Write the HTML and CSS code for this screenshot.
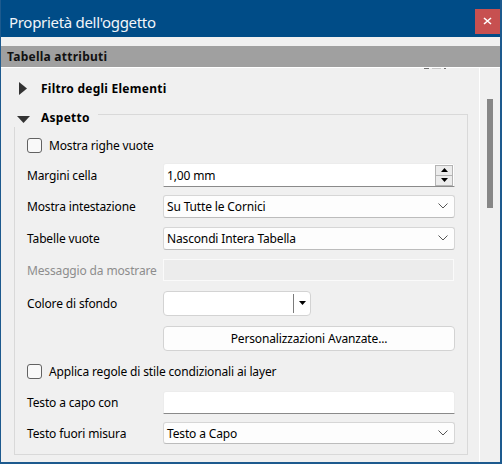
FILE: index.html
```html
<!DOCTYPE html>
<html lang="it">
<head>
<meta charset="utf-8">
<title>Proprietà dell'oggetto</title>
<link rel="stylesheet" href="styles.css">
</head>
<body>
<div class="window">
  <header class="titlebar">
    <span class="title">Proprietà dell'oggetto</span>
    <span class="close">
      <svg width="9" height="8" viewBox="0 0 9 8"><path d="M1 1 L8 7 M8 1 L1 7" stroke="#fff" stroke-width="1.6" fill="none"/></svg>
    </span>
  </header>
  <div class="strip"></div>
  <div class="section">Tabella attributi</div>
  <div class="scrollarea">
    <div class="viewport">
      <div class="clip-marks"><i class="dk"></i><i class="lt"></i><i class="dk sm"></i></div>
      <div class="collapsed">
        <svg class="tri-right" width="8" height="13" viewBox="0 0 8 13"><path d="M0 0 L8 6.5 L0 13 Z" fill="#333"/></svg>
        <span class="bold">Filtro degli Elementi</span>
      </div>
      <div class="group">
        <div class="legend">
          <svg class="tri-down" width="13" height="7" viewBox="0 0 13 7"><path d="M0 0 L13 0 L6.5 7 Z" fill="#333"/></svg>
          <span class="bold">Aspetto</span>
        </div>
        <div class="form">
          <label class="check-row"><span class="checkbox"></span>Mostra righe vuote</label>

          <span class="label">Margini cella</span>
          <div class="spinbox">
            <span class="value">1,00 mm</span>
            <span class="spin">
              <span class="spin-btn"><svg width="7" height="4" viewBox="0 0 7 4"><path d="M0 4 L3.5 0 L7 4 Z" fill="#000"/></svg></span>
              <span class="spin-btn"><svg width="7" height="4" viewBox="0 0 7 4"><path d="M0 0 L7 0 L3.5 4 Z" fill="#000"/></svg></span>
            </span>
          </div>

          <span class="label">Mostra intestazione</span>
          <div class="combo"><span>Su Tutte le Cornici</span><svg class="chev" width="10" height="6" viewBox="0 0 10 6"><path d="M0.5 0.5 L5 5 L9.5 0.5" stroke="#555" stroke-width="1" fill="none"/></svg></div>

          <span class="label">Tabelle vuote</span>
          <div class="combo"><span>Nascondi Intera Tabella</span><svg class="chev" width="10" height="6" viewBox="0 0 10 6"><path d="M0.5 0.5 L5 5 L9.5 0.5" stroke="#555" stroke-width="1" fill="none"/></svg></div>

          <span class="label disabled">Messaggio da mostrare</span>
          <div class="field-disabled"></div>

          <span class="label">Colore di sfondo</span>
          <div class="colorbtn">
            <span class="swatch"></span>
            <span class="sep"></span>
            <svg class="drop" width="7" height="4" viewBox="0 0 7 4"><path d="M0 0 L7 0 L3.5 4 Z" fill="#000"/></svg>
          </div>

          <div class="pushbtn">Personalizzazioni Avanzate...</div>

          <label class="check-row"><span class="checkbox"></span>Applica regole di stile condizionali ai layer</label>

          <span class="label">Testo a capo con</span>
          <div class="lineedit"></div>

          <span class="label">Testo fuori misura</span>
          <div class="combo short"><span>Testo a Capo</span><svg class="chev" width="10" height="6" viewBox="0 0 10 6"><path d="M0.5 0.5 L5 5 L9.5 0.5" stroke="#555" stroke-width="1" fill="none"/></svg></div>
        </div>
      </div>
    </div>
    <div class="scrollbar"><div class="thumb"></div></div>
  </div>
</div>
</body>
</html>
```

FILE: styles.css
```css
* { box-sizing: border-box; }

html, body {
  margin: 0;
  padding: 0;
  background: #f0f0f0;
}

body {
  font-family: "Noto Sans", "Open Sans", sans-serif;
  font-size: 12px;
  letter-spacing: -0.15px;
  color: #000;
}

.window {
  width: 502px;
  height: 464px;
  display: flex;
  flex-direction: column;
  background: #f0f0f0;
  border-left: 1px solid #1d5a8e;
  border-right: 2px solid #1d5a8e;
  border-bottom: 2px solid #1d5a8e;
  overflow: hidden;
}

.titlebar {
  height: 37px;
  flex: none;
  background: #004c87;
  display: flex;
  align-items: center;
  justify-content: space-between;
  padding: 6px 0 0 9px;
  margin-left: -1px;
  margin-right: -2px;
}

.title {
  color: #f2f5f9;
  font-size: 15px;
  letter-spacing: -0.3px;
}

.close {
  width: 25px;
  height: 25px;
  margin-right: 2px;
  margin-top: -1px;
  background: #c75050;
  display: flex;
  align-items: center;
  justify-content: center;
}

.strip {
  height: 9px;
  flex: none;
  background: #f0f0f0;
}

.section {
  height: 21px;
  flex: none;
  background: #a0a0a0;
  font-weight: bold;
  letter-spacing: 0.25px;
  padding-left: 6px;
  display: flex;
  align-items: center;
  color: #111;
}

.scrollarea {
  flex: 1;
  display: flex;
  border-top: 1px solid #ffffff;
  min-height: 0;
}

.viewport {
  flex: 1;
  position: relative;
  background: #f0f0f0;
  border-right: 1px solid #ffffff;
}

.clip-marks {
  position: absolute;
  top: 0;
  left: 423px;
  display: flex;
  gap: 3px;
}
.clip-marks i {
  display: block;
  height: 1px;
}
.clip-marks .dk { width: 5px; background: #707070; }
.clip-marks .lt { width: 9px; background: #c8c8c8; }
.clip-marks .sm { width: 2px; }

.scrollbar {
  width: 20px;
  flex: none;
  background: #f0f0f0;
  padding: 31px 0 0 7px;
}

.thumb {
  width: 6px;
  height: 109px;
  background: #868686;
}

.bold {
  font-weight: bold;
  letter-spacing: 0.25px;
}

.collapsed {
  margin-top: 10px;
  height: 20px;
  display: flex;
  align-items: center;
  padding-left: 18px;
  gap: 14px;
}

.group {
  position: relative;
  margin: 16px 11px 0 13px;
  border: 1px solid #d9d9d9;
  padding: 15px 12px 6px 12px;
}

.legend {
  position: absolute;
  top: -8px;
  left: -1px;
  height: 20px;
  width: 84px;
  background: #f0f0f0;
  display: flex;
  align-items: center;
  padding-left: 3px;
  gap: 11px;
}

.tri-down {
  margin-top: 4px;
}

.form {
  display: grid;
  grid-template-columns: 136px 1fr;
  grid-template-rows: 30px 30px 32px 32px 32px 34px 36px 30px 32px 30px;
  align-items: center;
}

.label {
  white-space: nowrap;
}
.label.disabled {
  color: #8d8d8d;
}

.check-row {
  grid-column: 1 / -1;
  display: flex;
  align-items: center;
  gap: 7px;
}

.checkbox {
  width: 15px;
  height: 15px;
  border: 1px solid #626262;
  border-radius: 3px;
  background: #f9f9f9;
}

.spinbox {
  height: 24px;
  background: #fff;
  border: 1px solid #ececec;
  border-bottom: 1px solid #8a8a8a;
  border-radius: 3px 3px 0 0;
  display: flex;
  align-items: center;
  justify-content: space-between;
  padding-left: 3px;
  padding-right: 1px;
}

.spin {
  display: flex;
  flex-direction: column;
}

.spin-btn {
  width: 18px;
  height: 11px;
  border: 1px solid #b4b4b4;
  background: #ececec;
  display: flex;
  align-items: center;
  justify-content: center;
}
.spin-btn + .spin-btn {
  margin-top: -1px;
}

.combo {
  height: 23px;
  background: #fdfdfd;
  border: 1px solid #d6d6d6;
  border-bottom-color: #bcbcbc;
  border-radius: 3px;
  display: flex;
  align-items: center;
  justify-content: space-between;
  padding: 0 6px 0 3px;
}
.combo.short {
  height: 22px;
}

.field-disabled {
  height: 22px;
  margin-right: 1px;
  background: #ececec;
  border: 1px solid #fafafa;
}

.colorbtn {
  width: 148px;
  height: 25px;
  background: #fff;
  border: 1px solid #d3d3d3;
  border-radius: 4px;
  display: flex;
  align-items: center;
  padding-right: 4px;
}
.colorbtn .swatch {
  flex: 1;
}
.colorbtn .sep {
  width: 1px;
  height: 19px;
  background: #7c7c7c;
  margin-right: 5px;
}

.pushbtn {
  grid-column: 2;
  height: 25px;
  background: #fdfdfd;
  border: 1px solid #d3d3d3;
  border-radius: 4px;
  display: flex;
  align-items: center;
  justify-content: center;
}

.lineedit {
  height: 23px;
  background: #fff;
  border: 1px solid #ececec;
  border-bottom: 1px solid #8a8a8a;
  border-radius: 3px 3px 0 0;
}
```
